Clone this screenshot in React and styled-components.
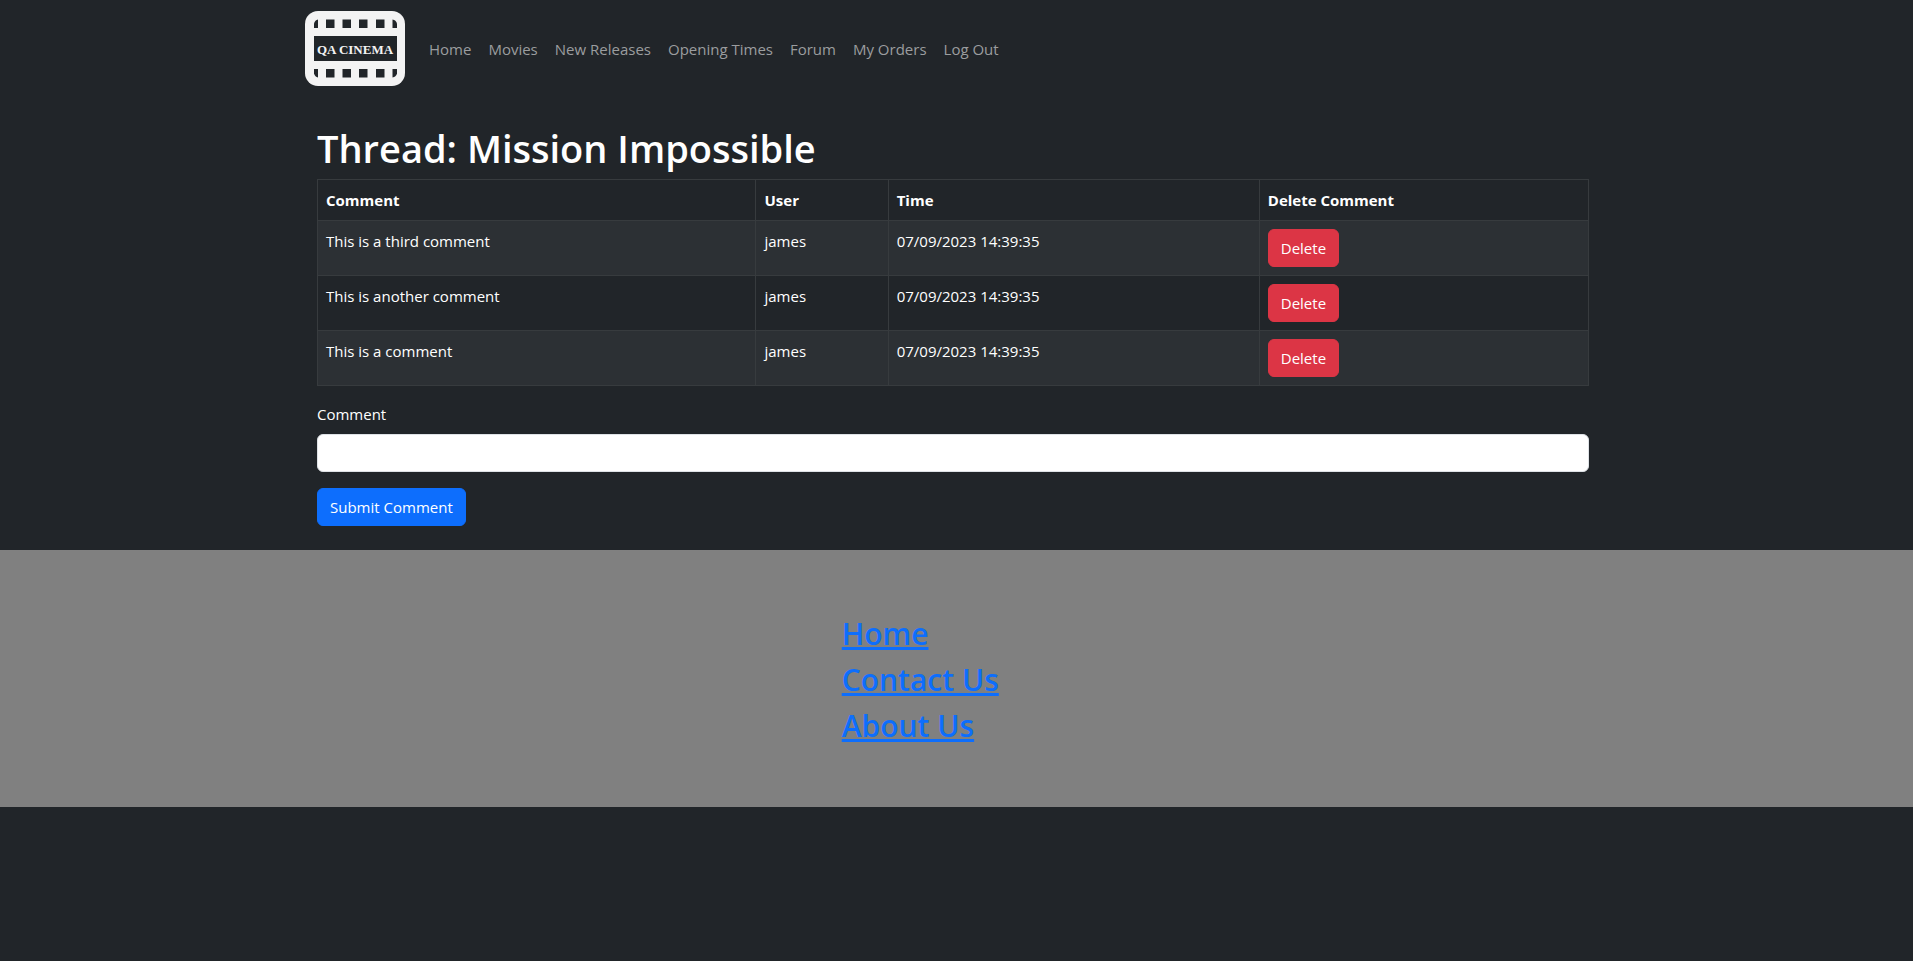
import React from "react";
import styled, { createGlobalStyle } from "styled-components";

const GlobalStyle = createGlobalStyle`
  *, *::before, *::after { box-sizing: border-box; }
  body {
    margin: 0;
    background: #212529;
    color: #fff;
    font-family: "Open Sans", "Noto Sans", sans-serif;
    font-size: 15px;
    line-height: 24px;
  }
`;

const Container = styled.div`
  max-width: 1320px;
  margin: 0 auto;
  padding: 0 ${(p) => p.$gutter}px;
`;

const Page = styled.div`
  padding-right: 7px;
`;

const Navbar = styled.nav`
  display: flex;
  align-items: center;
  gap: 16px;
  padding: 11px 0 12px;
`;

const Brand = styled.a`
  display: block;
  height: 75px;
  svg { display: block; }
`;

const NavList = styled.ul`
  display: flex;
  flex-wrap: wrap;
  gap: 1px;
  margin: 0;
  padding: 0;
  list-style: none;
`;

const NavLink = styled.a`
  display: block;
  padding: 8px;
  color: #9b9d9f;
  text-decoration: none;
`;

const Title = styled.h1`
  margin: 26px 0 7px;
  font-size: 38px;
  font-weight: 600;
  line-height: 48px;
`;

const Table = styled.table`
  width: 100%;
  margin-bottom: 16px;
  border-collapse: collapse;
  table-layout: fixed;
  th, td {
    padding: 8px;
    border: 1px solid #373b3e;
    text-align: left;
    vertical-align: top;
  }
  th { font-weight: 700; }
  tbody tr:nth-child(odd) { background: #2c3034; }
`;

const Col = styled.col`
  width: ${(p) => p.$share}%;
`;

const Button = styled.button`
  display: block;
  height: 38px;
  padding: 6px 12px;
  border: 1px solid ${(p) => p.$color};
  border-radius: 6px;
  background: ${(p) => p.$color};
  color: #fff;
  font: inherit;
  cursor: pointer;
`;

const Form = styled.form`
  padding-bottom: 24px;
`;

const Label = styled.label`
  display: block;
  margin-bottom: 8px;
`;

const Input = styled.input`
  display: block;
  width: 100%;
  height: 38px;
  margin-bottom: 16px;
  padding: 6px 12px;
  border: 1px solid #dee2e6;
  border-radius: 6px;
  background: #fff;
  color: #212529;
  font: inherit;
`;

const Footer = styled.footer`
  padding: 65px 0 54px 44%;
  background: #808080;
`;

const FooterHeading = styled.h2`
  margin: 0 0 8px;
  font-size: 30px;
  font-weight: 600;
  line-height: 38px;
`;

const FooterLink = styled.a`
  color: #0d6efd;
  text-decoration-thickness: 3px;
  text-underline-offset: 2px;
  text-decoration-skip-ink: none;
`;

const LogoText = styled.text`
  fill: #f3f3f3;
  font-family: "Liberation Serif", serif;
  font-size: 13px;
  font-weight: 700;
`;

const holes = [21, 37.5, 54, 71];

function Logo() {
  return (
    <svg width="100" height="75" viewBox="0 0 100 75" role="img" aria-label="QA Cinema">
      <rect width="100" height="75" rx="13" fill="#f3f3f3" />
      <rect x="9" y="25" width="83" height="25" fill="#212529" />
      {[8.5, 58].map((y) => (
        <g key={y} fill="#212529">
          {holes.map((x) => (
            <rect key={x} x={x} y={y} width="8.500" height="8.500" />
          ))}
        </g>
      ))}
      <g fill="#212529">
        <path d="M13 8.500V17H9V12.500Q10 9 13 8.500Z" />
        <path d="M87.500 8.500V17H92V12.500Q91 9 87.500 8.500Z" />
        <path d="M13 66.500V58H9V62.500Q10 66 13 66.500Z" />
        <path d="M87.500 66.500V58H92V62.500Q91 66 87.500 66.500Z" />
      </g>
      <LogoText x="50" y="43" textAnchor="middle">QA CINEMA</LogoText>
    </svg>
  );
}

const links = ["Home", "Movies", "New Releases", "Opening Times", "Forum", "My Orders", "Log Out"];
const columns = [
  ["Comment", 34.5],
  ["User", 10.4],
  ["Time", 29.2],
  ["Delete Comment", 25.9],
];
const comments = [
  { text: "This is a third comment", user: "james", time: "07/09/2023 14:39:35" },
  { text: "This is another comment", user: "james", time: "07/09/2023 14:39:35" },
  { text: "This is a comment", user: "james", time: "07/09/2023 14:39:35" },
];

export default function App() {
  return (
    <>
      <GlobalStyle />
      <Page>
        <Container as="header" $gutter={12}>
          <Navbar>
            <Brand href="#"><Logo /></Brand>
            <NavList>
              {links.map((l) => (
                <li key={l}><NavLink href="#">{l}</NavLink></li>
              ))}
            </NavList>
          </Navbar>
        </Container>
        <Container as="main" $gutter={24}>
          <Title>Thread: Mission Impossible</Title>
          <Table>
            <colgroup>
              {columns.map(([name, share]) => <Col key={name} $share={share} />)}
            </colgroup>
            <thead>
              <tr>{columns.map(([name]) => <th key={name} scope="col">{name}</th>)}</tr>
            </thead>
            <tbody>
              {comments.map((c) => (
                <tr key={c.text}>
                  <td>{c.text}</td>
                  <td>{c.user}</td>
                  <td>{c.time}</td>
                  <td><Button type="button" $color="#dc3545">Delete</Button></td>
                </tr>
              ))}
            </tbody>
          </Table>
          <Form onSubmit={(e) => e.preventDefault()}>
            <Label htmlFor="comment">Comment</Label>
            <Input id="comment" type="text" />
            <Button type="submit" $color="#0d6efd">Submit Comment</Button>
          </Form>
        </Container>
      </Page>
      <Footer>
        {["Home", "Contact Us", "About Us"].map((l) => (
          <FooterHeading key={l}><FooterLink href="#">{l}</FooterLink></FooterHeading>
        ))}
      </Footer>
    </>
  );
}
